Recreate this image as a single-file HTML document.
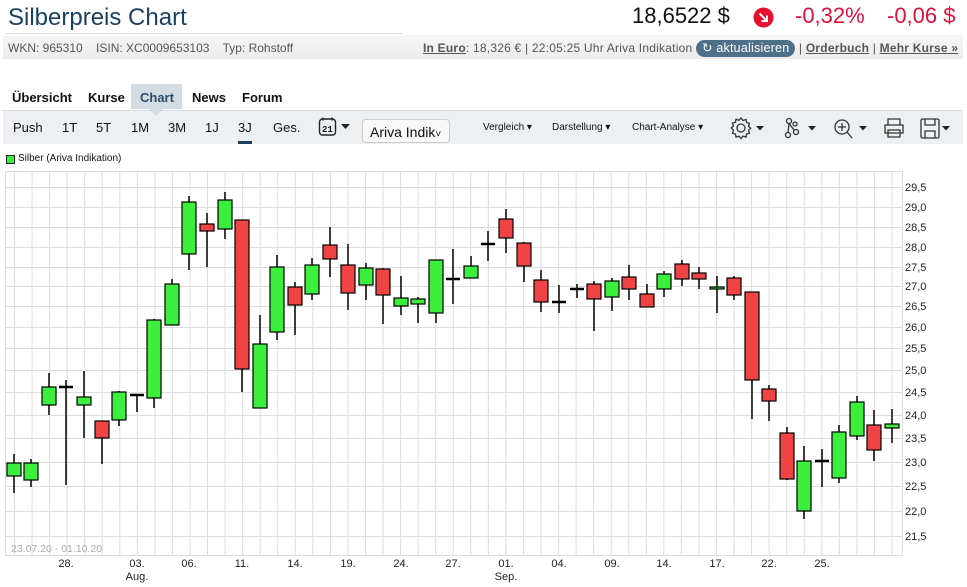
<!DOCTYPE html>
<html><head><meta charset="utf-8"><style>
*{margin:0;padding:0;box-sizing:border-box}
body{width:967px;height:587px;background:#fff;font-family:"Liberation Sans",sans-serif;position:relative;overflow:hidden;color:#222}
.abs{position:absolute;white-space:nowrap}
.title{left:8px;top:4px;font-size:24px;color:#1a3f5f}
.hr{left:5px;top:33px;width:398px;height:1px;background:#ddd}
.info{left:3px;top:35px;width:960px;height:24px;background:linear-gradient(#f6f6f6,#ececec)}
.it{font-size:12px;color:#555;top:41px}
.it u{color:#555}
.btn{background:#4f7089;color:#fff;border-radius:9px;padding:1px 6px 2px;font-size:12.5px}
.tabs{top:90px;font-size:13px;font-weight:bold;color:#111}
.chartTab{left:131px;top:84px;width:51px;height:25px;background:#d3dce3}
.tb{left:3px;top:110px;width:960px;height:34px;background:#edf0f3;border-top:1px solid #d8dde2}
.tbi{top:120px;font-size:13px;color:#111}
.sm{top:122px;font-size:10px;color:#111}
</style></head><body>
<div class="abs title">Silberpreis Chart</div>
<div class="abs hr"></div>
<div class="abs info"></div>
<div class="abs it" style="left:8px">WKN: 965310 &nbsp;&nbsp; ISIN: XC0009653103 &nbsp;&nbsp; Typ: Rohstoff</div>
<div class="abs it" style="left:423px;top:40px;letter-spacing:0.22px"><u><b style="font-weight:bold">In Euro</b></u>: 18,326 € | 22:05:25 Uhr Ariva Indikation <span class="btn">↻ aktualisieren</span> | <u><b>Orderbuch</b></u> | <u><b>Mehr Kurse »</b></u></div>
<div class="abs" style="left:632px;top:3px;font-size:22px;color:#111">18,6522 $</div>
<svg class="abs" style="left:753px;top:7px" width="21" height="21"><circle cx="10.5" cy="10.5" r="10" fill="#e8102f"/><path d="M6.5 6.5L14 14M14 8.5V14H8.5" stroke="#fff" stroke-width="2" fill="none"/></svg>
<div class="abs" style="left:795px;top:3px;font-size:22px;color:#e0103a">-0,32%</div>
<div class="abs" style="left:887px;top:3px;font-size:22px;color:#e0103a">-0,06 $</div>

<div class="abs chartTab"></div>
<div class="abs tb"></div>
<svg class="abs" style="left:149px;top:109px" width="14" height="8"><path d="M0 0L7 7L14 0Z" fill="#d3dce3"/></svg>
<div class="abs tabs" style="left:12px">Übersicht</div>
<div class="abs tabs" style="left:88px">Kurse</div>
<div class="abs tabs" style="left:140px;color:#2a4d6a">Chart</div>
<div class="abs tabs" style="left:192px">News</div>
<div class="abs tabs" style="left:242px">Forum</div>

<div class="abs tbi" style="left:13px">Push</div>
<div class="abs tbi" style="left:62px">1T</div>
<div class="abs tbi" style="left:96px">5T</div>
<div class="abs tbi" style="left:131px">1M</div>
<div class="abs tbi" style="left:168px">3M</div>
<div class="abs tbi" style="left:205px">1J</div>
<div class="abs tbi" style="left:238px">3J</div>
<div class="abs" style="left:238px;top:141px;width:14px;height:3px;background:#1a3f5f"></div>
<div class="abs tbi" style="left:273px">Ges.</div>
<svg class="abs" style="left:318px;top:116px" width="36" height="22"><rect x="1.5" y="3" width="16" height="16" rx="3" fill="none" stroke="#222" stroke-width="1.4"/><path d="M5 1.5v3M14 1.5v3" stroke="#222" stroke-width="1.4"/><text x="4" y="16" font-size="9" font-weight="bold" font-family="Liberation Mono" fill="#222">21</text><path d="M23 8h9l-4.5 5z" fill="#222"/></svg>
<div class="abs" style="left:362px;top:119px;width:88px;height:24px;background:#f8f8f8;border:1px solid #ccc;border-radius:4px;font-size:14px;padding:4px 0 0 7px;color:#111">Ariva Indik<span style="font-size:10px">˅</span></div>
<div class="abs sm" style="left:483px">Vergleich ▾</div>
<div class="abs sm" style="left:552px">Darstellung ▾</div>
<div class="abs sm" style="left:632px">Chart-Analyse ▾</div>
<svg class="abs" style="left:728px;top:115px" width="240" height="26">
<g fill="none" stroke="#333" stroke-width="1.3">
<circle cx="13" cy="13" r="4"/><path d="M13 3l2 2.5 3-1 .5 3 3 .8-1 3 2.2 2-2.2 2 1 3-3 .8-.5 3-3-1-2 2.5-2-2.5-3 1-.5-3-3-.8 1-3L3.3 13l2.2-2-1-3 3-.8.5-3 3 1z"/>
<circle cx="61" cy="6" r="2.5"/><circle cx="60" cy="20" r="2.5"/><circle cx="68" cy="17" r="2.5"/><path d="M61 8.5L60 17.5M61 8.5l5.5 7"/><circle cx="67" cy="9" r="2"/>
<circle cx="114" cy="12" r="7"/><path d="M119 17l5 6M114 8v8M110 12h8"/>
<path d="M160 10V4h12v6M157 10h18v8h-18zM160 15h12v7h-12z"/>
<rect x="193" y="4" width="18" height="19" rx="1.5"/><path d="M197 4v6h10V4M197 23v-7h10v7"/>
</g>
<g fill="#222"><path d="M28 11h8l-4 4.5z"/><path d="M80 11h8l-4 4.5z"/><path d="M131 11h8l-4 4.5z"/><path d="M214 11h8l-4 4.5z"/></g>
</svg>

<div class="abs" style="left:6px;top:155px;width:9px;height:9px;background:#3cef3c;border:1px solid #222"></div>
<div class="abs" style="left:18px;top:153px;font-size:10px;color:#111">Silber (Ariva Indikation)</div>

<svg class="abs" style="left:0;top:0" width="967" height="587">
<defs><pattern id="vg" x="14" y="0" width="17.55" height="10" patternUnits="userSpaceOnUse"><rect x="0" y="0" width="1" height="10" fill="#dcdcdc"/></pattern></defs>
<rect x="5" y="171" width="897" height="384" fill="url(#vg)"/>
<g stroke="#dcdcdc" stroke-width="1">
<path d="M5 171.5H902M5 187.5H902M5 207.5H902M5 227.5H902M5 247.5H902M5 267.5H902M5 286.5H902M5 306.5H902M5 327.5H902M5 348.5H902M5 370.5H902M5 392.5H902M5 415.5H902M5 438.5H902M5 462.5H902M5 486.5H902M5 511.5H902M5 536.5H902M5 555.5H902M5.5 171V555M902.5 171V555"/>
</g>
<g stroke="#000" stroke-width="1.5">
<path d="M14 454V493M31 459V487M49 373V415M66 380V485M84 371V438M102 438V464M119 391V426M137 395V412M154 319V408M172 279V325M189 196V270M207 213V267M225 192V239M242 220V392M260 315V408M277 255V340M295 282V335M312 258V300M330 227V277M348 244V310M366 263V300M383 268V324M401 276V315M418 297V323M436 260V323M453 249V304M471 256V278M488 231V261M506 209V253M524 242V282M541 270V312M559 285V313M577 284V298M594 281V331M612 278V311M629 265V300M647 284V307M664 271V297M682 260V286M699 267V289M717 276V313M734 276V300M752 292V419M769 385V421M787 427V480M804 446V519M822 449V487M839 425V483M857 396V440M874 410V461M892 409V443"/>
<path stroke-width="2.5" d="M59 387H73M130 395H144M446 279H460M481 244H495M552 302H566M570 289H584M815 461H829"/>
</g>
<g stroke="#000" stroke-width="1.2" fill="#3cef3c">
<rect x="7" y="463" width="14" height="13"/><rect x="24" y="463" width="14" height="17"/><rect x="42" y="387" width="14" height="18"/><rect x="77" y="397" width="14" height="8"/><rect x="112" y="392" width="14" height="28"/><rect x="147" y="320" width="14" height="78"/><rect x="165" y="284" width="14" height="41"/><rect x="182" y="202" width="14" height="52"/><rect x="218" y="200" width="14" height="29"/><rect x="253" y="344" width="14" height="64"/><rect x="270" y="267" width="14" height="65"/><rect x="305" y="265" width="14" height="29"/><rect x="359" y="268" width="14" height="17"/><rect x="394" y="298" width="14" height="8"/><rect x="411" y="299" width="14" height="5"/><rect x="429" y="260" width="14" height="53"/><rect x="464" y="266" width="14" height="12"/><rect x="605" y="281" width="14" height="16"/><rect x="657" y="274" width="14" height="15"/><rect x="710" y="287" width="14" height="2"/><rect x="797" y="461" width="14" height="50"/><rect x="832" y="432" width="14" height="46"/><rect x="850" y="402" width="14" height="34"/><rect x="885" y="424" width="14" height="4"/>
</g>
<g stroke="#000" stroke-width="1.2" fill="#f04444">
<rect x="95" y="421" width="14" height="17"/><rect x="200" y="224" width="14" height="7"/><rect x="235" y="220" width="14" height="149"/><rect x="288" y="287" width="14" height="18"/><rect x="323" y="245" width="14" height="14"/><rect x="341" y="265" width="14" height="28"/><rect x="376" y="269" width="14" height="26"/><rect x="499" y="219" width="14" height="19"/><rect x="517" y="243" width="14" height="23"/><rect x="534" y="280" width="14" height="22"/><rect x="587" y="284" width="14" height="15"/><rect x="622" y="277" width="14" height="12"/><rect x="640" y="294" width="14" height="13"/><rect x="675" y="264" width="14" height="15"/><rect x="692" y="273" width="14" height="6"/><rect x="727" y="278" width="14" height="17"/><rect x="745" y="292" width="14" height="88"/><rect x="762" y="389" width="14" height="12"/><rect x="780" y="433" width="14" height="46"/><rect x="867" y="425" width="14" height="25"/>
</g>
<g font-family="Liberation Sans" font-size="11" fill="#222">
<text x="905" y="191">29,5</text><text x="905" y="211">29,0</text><text x="905" y="231">28,5</text><text x="905" y="251">28,0</text><text x="905" y="271">27,5</text><text x="905" y="290">27,0</text><text x="905" y="310">26,5</text><text x="905" y="331">26,0</text><text x="905" y="352">25,5</text><text x="905" y="374">25,0</text><text x="905" y="396">24,5</text><text x="905" y="419">24,0</text><text x="905" y="442">23,5</text><text x="905" y="466">23,0</text><text x="905" y="490">22,5</text><text x="905" y="515">22,0</text><text x="905" y="540">21,5</text>
<g text-anchor="middle">
<text x="66" y="567">28.</text><text x="137" y="567">03.</text><text x="137" y="580">Aug.</text><text x="189" y="567">06.</text><text x="242" y="567">11.</text><text x="295" y="567">14.</text><text x="348" y="567">19.</text><text x="401" y="567">24.</text><text x="453" y="567">27.</text><text x="506" y="567">01.</text><text x="506" y="580">Sep.</text><text x="559" y="567">04.</text><text x="612" y="567">09.</text><text x="664" y="567">14.</text><text x="717" y="567">17.</text><text x="769" y="567">22.</text><text x="822" y="567">25.</text>
</g>
<text x="11" y="552" fill="#aaa" font-size="10.5">23.07.20 - 01.10.20</text>
</g>
</svg>
</body></html>
